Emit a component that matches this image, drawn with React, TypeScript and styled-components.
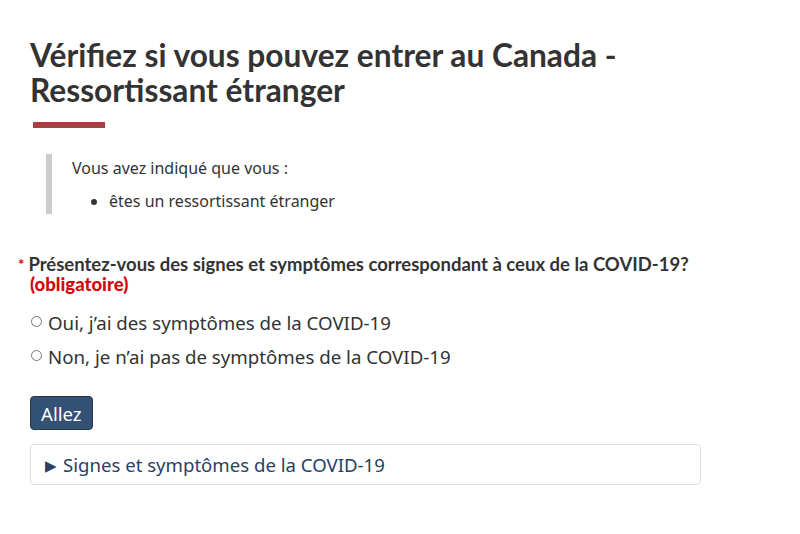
import React from "react";
import styled, { createGlobalStyle } from "styled-components";

const Global = createGlobalStyle`
  html, body { margin: 0; padding: 0; background: #fff; }
  body { font-family: "Noto Sans", sans-serif; color: #333; }
`;

const Page = styled.main`
  padding: 38px 0 0 30px;
  width: 671px;
`;

const Title = styled.h1`
  margin: 0;
  font-family: Lato, sans-serif;
  font-weight: 700;
  font-size: 31.7px;
  line-height: 35px;
  color: #333;
  &::after {
    content: "";
    display: block;
    width: 72px;
    height: 6px;
    background: #af3c43;
    margin: 14px 0 0 3px;
  }
`;

const Quote = styled.blockquote`
  margin: 26px 0 0 16px;
  padding: 3px 0 2px 20px;
  border-left: 6px solid #ccc;
  font-size: 16px;
  line-height: 22px;
`;

const QuoteText = styled.p`
  margin: 0;
`;

const List = styled.ul`
  margin: 11px 0 0 0;
  padding-left: 37px;
  li { margin: 0; }
`;

const Question = styled.fieldset`
  border: 0;
  margin: 40px 0 0 0;
  padding: 0;
`;

const Legend = styled.legend`
  padding: 0;
  margin-left: -12px;
  font-family: Lato, sans-serif;
  font-weight: 700;
  font-size: 18.5px;
  line-height: 20px;
  color: #333;
`;

const Star = styled.span`
  color: #d3080c;
  font-size: 15px;
  vertical-align: top;
  margin-right: 4px;
`;

const Required = styled.strong`
  display: block;
  margin-left: 12px;
  color: #d3080c;
`;

const Options = styled.div`
  display: flex;
  flex-direction: column;
  gap: 8px;
  margin-top: 16px;
`;

const Option = styled.label`
  display: flex;
  align-items: center;
  gap: 6px;
  font-size: 18.7px;
  line-height: 26px;
  color: #333;
`;

const Radio = styled.span`
  flex: none;
  width: 9px;
  height: 9px;
  border: 1px solid #767676;
  border-radius: 50%;
  margin-left: 1px;
  margin-top: -4px;
`;

const Button = styled.button`
  display: block;
  margin-top: 26px;
  height: 34px;
  padding: 0 10px;
  background: #335075;
  border: 1px solid #26374a;
  border-radius: 4px;
  color: #fff;
  font-family: "Noto Sans", sans-serif;
  font-size: 18.6px;
`;

const Details = styled.details`
  margin-top: 14px;
  border: 1px solid #ddd;
  border-radius: 4px;
  height: 41px;
  box-sizing: border-box;
`;

const Summary = styled.summary`
  padding: 7px 14px;
  font-size: 18.6px;
  line-height: 25px;
  color: #284162;
  list-style: none;
  cursor: pointer;
  &::-webkit-details-marker { display: none; }
`;

const Arrow = styled.span`
  font-size: 15px;
  margin-right: 6px;
  vertical-align: 1px;
`;

export default function App() {
  return (
    <>
      <Global />
      <Page>
        <Title>Vérifiez si vous pouvez entrer au Canada - Ressortissant étranger</Title>
        <Quote>
          <QuoteText>Vous avez indiqué que vous :</QuoteText>
          <List>
            <li>êtes un ressortissant étranger</li>
          </List>
        </Quote>
        <Question>
          <Legend>
            <Star>*</Star>Présentez-vous des signes et symptômes correspondant à ceux de la COVID-19?
            <Required>(obligatoire)</Required>
          </Legend>
          <Options>
            <Option><Radio />Oui, j’ai des symptômes de la COVID-19</Option>
            <Option><Radio />Non, je n’ai pas de symptômes de la COVID-19</Option>
          </Options>
        </Question>
        <Button>Allez</Button>
        <Details>
          <Summary><Arrow>▶</Arrow>Signes et symptômes de la COVID-19</Summary>
        </Details>
      </Page>
    </>
  );
}
